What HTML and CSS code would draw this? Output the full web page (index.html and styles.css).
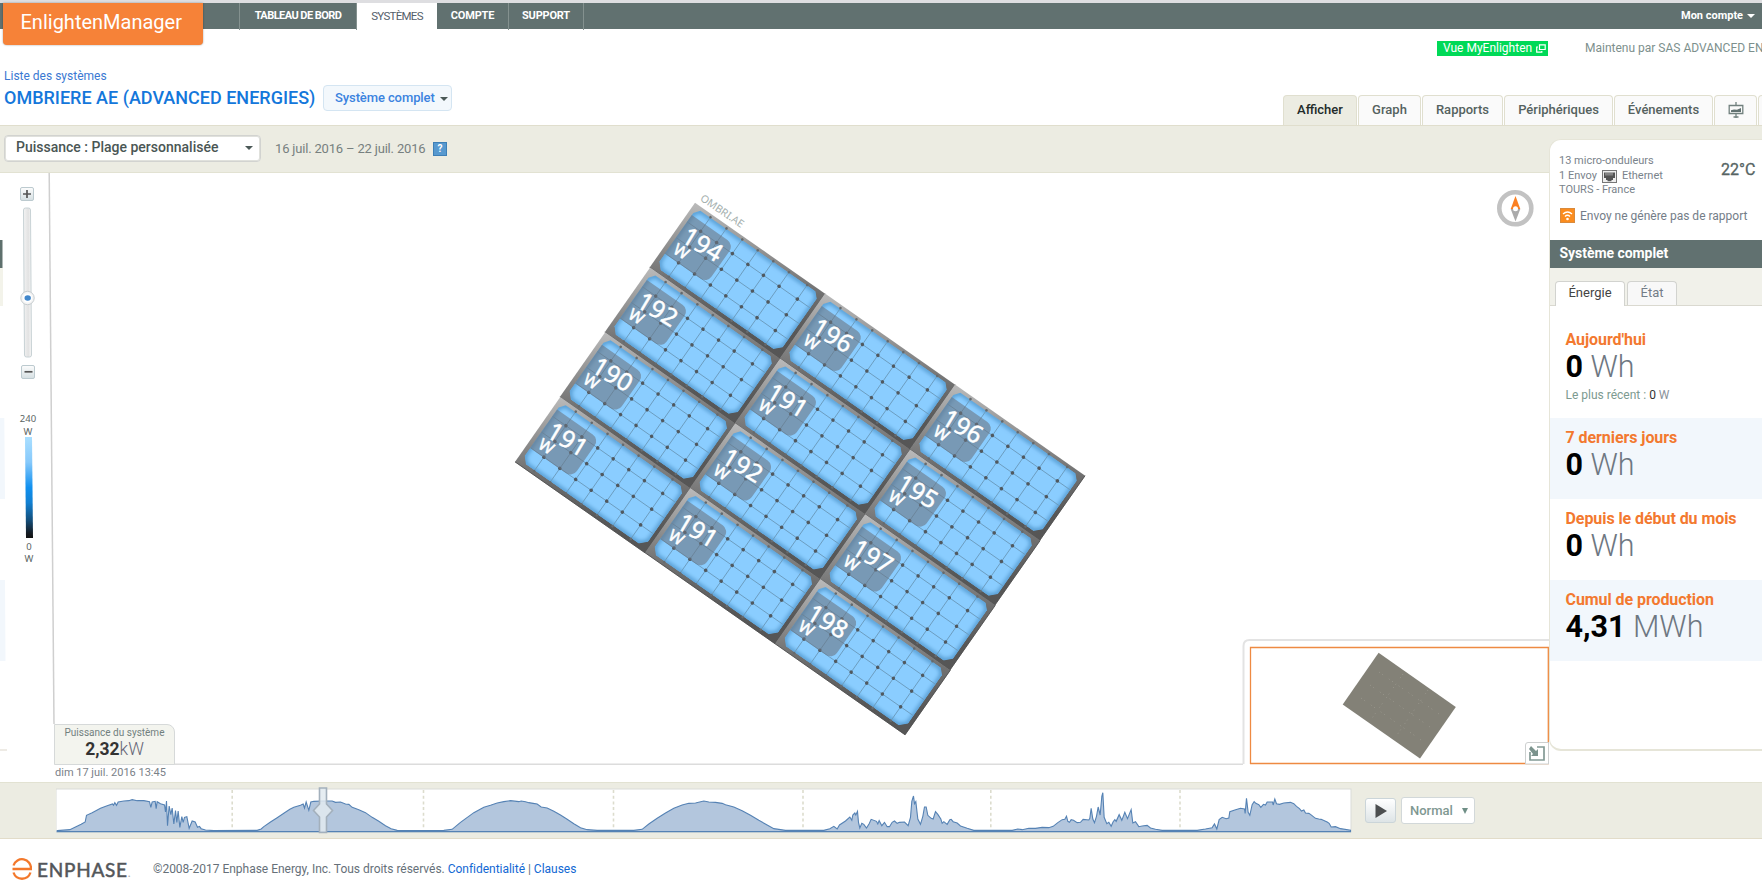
FILE: index.html
```html
<!DOCTYPE html>
<html lang="fr">
<head>
<meta charset="utf-8">
<title>EnlightenManager</title>
<link rel="stylesheet" href="styles.css">
</head>
<body>
<div class="page">
  <nav class="topbar">
    <div class="brand">EnlightenManager</div>
    <a class="nav-item nav-first">TABLEAU DE BORD</a>
    <a class="nav-item nav-active">SYSTÈMES</a>
    <a class="nav-item nav-account">COMPTE</a>
    <a class="nav-item nav-support">SUPPORT</a>
    <span class="my-account">Mon compte <i class="caret caret-white"></i></span>
  </nav>

  <header class="header">
    <div class="heading">
      <a class="crumb">Liste des systèmes</a>
      <div class="title-row">
        <h1 class="title">OMBRIERE AE (ADVANCED ENERGIES)</h1>
        <span class="chip">Système complet <i class="caret"></i></span>
      </div>
    </div>
    <div class="header-right">
      <div class="links">
        <a class="green-link">Vue MyEnlighten
          <svg width="10" height="9" viewBox="0 0 10 9"><path d="M3.5.8h5.700v4.700H3.500zM2 3H.7v5.200h5.100V7" fill="none" stroke="#fff" stroke-width="1.200"/></svg>
        </a>
        <span class="maintained">Maintenu par SAS ADVANCED EN</span>
      </div>
      <div class="tabs">
        <a class="tab tab-on">Afficher</a>
        <a class="tab t-graph">Graph</a>
        <a class="tab t-rapports">Rapports</a>
        <a class="tab t-periph">Périphériques</a>
        <a class="tab t-events">Événements</a>
        <a class="tab t-icon">
          <svg width="16" height="17" viewBox="0 0 16 17"><path d="M8 0v3M1.200 3.500h13.600v8H1.200zM8 12v4M5.500 15h5" fill="none" stroke="#71807e" stroke-width="1.300"/><path d="M3 10V8.200l3-.7 3 .3 4-1.800V10z" fill="#617170"/></svg>
        </a>
        <a class="tab t-last"></a>
      </div>
    </div>
  </header>

  <main class="main">
    <section class="workspace">
      <div class="toolbar">
        <div class="select">Puissance : Plage personnalisée <i class="caret"></i></div>
        <span class="range">16 juil. 2016 – 22 juil. 2016</span>
        <span class="help">?</span>
      </div>
      <div class="stage">
        <svg class="rail" width="55" height="592" viewBox="0 173 55 592">
          <defs>
            <linearGradient id="btn" x1="0" y1="0" x2="0" y2="1"><stop offset="0" stop-color="#fdfdfd"/><stop offset="1" stop-color="#d5dfe2"/></linearGradient>
            <linearGradient id="track"><stop offset="0" stop-color="#f4f4f4"/><stop offset=".6" stop-color="#e2e2e2"/><stop offset="1" stop-color="#f8f8f8"/></linearGradient>
            <linearGradient id="scale" x1="0" y1="0" x2="0" y2="1"><stop offset="0" stop-color="#aadfff"/><stop offset=".25" stop-color="#86c9fb"/><stop offset=".5" stop-color="#1090ef"/><stop offset=".65" stop-color="#1280d2"/><stop offset=".82" stop-color="#134f7c"/><stop offset=".95" stop-color="#151c24"/><stop offset="1" stop-color="#111"/></linearGradient>
          </defs>
          <path d="M0 240h2.500v28H0z" fill="#5e706d"/><path d="M0 268h3v38H0z" fill="#f3f3ea"/>
          <path d="M0 418h4.300l.7 81H0zM0 580h5l.5 81H0z" fill="#f2f7fc"/><path d="M0 750h7" stroke="#e8e4dc" stroke-width="1.500"/>
          <rect x="20.500" y="187.500" width="13" height="13" rx="1.500" fill="url(#btn)" stroke="#bccacf"/>
          <path d="M23 194h8M27 190v8" stroke="#555" stroke-width="1.700"/>
          <path d="M23.500 210q0-2 2-2h3q2 0 2 2l1 145q0 2-2 2h-3q-2 0-2-2z" fill="url(#track)" stroke="#c8d2d5"/>
          <circle cx="27.500" cy="298" r="6.700" fill="#f5f5f5" stroke="#c6cccf"/><circle cx="27.500" cy="298" r="4.500" fill="#fff"/>
          <ellipse cx="27.700" cy="298" rx="3.200" ry="2.700" fill="#4287cb"/>
          <rect x="21.500" y="365.500" width="13" height="13" rx="1.500" fill="url(#btn)" stroke="#bccacf"/>
          <path d="M24.500 371.800h8" stroke="#555" stroke-width="1.700"/>
          <g class="scale-text"><text x="28" y="422">240</text><text x="28" y="434.500">W</text><text x="29" y="549.500">0</text><text x="29" y="561.500">W</text></g>
          <path d="M25 437h7l1 101h-7z" fill="url(#scale)"/>
          <path d="M49.200 173L54 724" stroke="#cfcfcf" stroke-width="1.500"/>
        </svg>
        <svg class="map" width="1494" height="592" viewBox="55 173 1494 592">
          <defs>
            <linearGradient id="frame" gradientUnits="userSpaceOnUse" x1="0" y1="0" x2="80" y2="140"><stop offset="0" stop-color="#bababa"/><stop offset=".5" stop-color="#6e6e6e"/><stop offset=".75" stop-color="#575757"/><stop offset="1" stop-color="#555"/></linearGradient>
            <clipPath id="cellclip"><path id="shape" d="M9 3.500H149.500l5.500 5.500V68l-7 7H10.500l-6-6.500V9.500z"/></clipPath>
            <filter id="soft" x="-10%" y="-10%" width="120%" height="120%"><feGaussianBlur stdDeviation="2"/></filter>
            <g id="panel">
              <rect width="158.900" height="79.100" fill="url(#frame)"/>
              <path d="M158.800 0V79H0" fill="none" stroke="#4e4e4e" stroke-width=".8"/>
              <g clip-path="url(#cellclip)">
                <use href="#shape" fill="#8acdff"/>
                <use href="#shape" fill="none" stroke="#4a91c8" stroke-width="3.800" filter="url(#soft)"/>
                <path d="M21 3V75M40.500 3V75M59.800 3V75M78.700 3V75M97.700 3V75M116.800 3V75M139.100 3V75M4 20.200H156M4 39.400H156M4 58.600H156" stroke="#6c9cbe" stroke-width=".9"/>
              </g>
              <g fill="none" stroke="#505960" stroke-width="3.500" stroke-linecap="round">
                <path id="dots" d="M21 20.200h0M40.500 20.200h0M59.800 20.200h0M78.700 20.200h0M97.700 20.200h0M116.800 20.200h0M139.100 20.200h0"/>
                <use href="#dots" y="19.200"/><use href="#dots" y="38.400"/>
              </g>
              <g fill="none" stroke="#666a6d" stroke-width="2.600" stroke-linecap="round">
                <use href="#dots" y="-17.200"/><use href="#dots" y="55.500"/>
              </g>
              <path d="M4.500 12H48a8 8 0 0 1 8 8V51a8 8 0 0 1-8 8H4.500z" fill="#6a7480" fill-opacity=".58"/>
            </g>
          </defs>
          <use href="#panel" transform="translate(695 202.700) rotate(35)"/>
          <use href="#panel" transform="translate(825 293.600) rotate(35)"/>
          <use href="#panel" transform="translate(955 384.600) rotate(35)"/>
          <use href="#panel" transform="translate(650.100 267.500) rotate(35)"/>
          <use href="#panel" transform="translate(780.100 358.400) rotate(35)"/>
          <use href="#panel" transform="translate(910.100 449.400) rotate(35)"/>
          <use href="#panel" transform="translate(605.200 332.300) rotate(35)"/>
          <use href="#panel" transform="translate(735.200 423.200) rotate(35)"/>
          <use href="#panel" transform="translate(865.200 514.200) rotate(35)"/>
          <use href="#panel" transform="translate(560.300 397.100) rotate(35)"/>
          <use href="#panel" transform="translate(690.300 488) rotate(35)"/>
          <use href="#panel" transform="translate(820.300 579) rotate(35)"/>
          <g class="readings">
            <g transform="translate(702.500 244.500) rotate(31)"><text y="8.500">194</text><text class="unit" x="-14.500" y="22.500">W</text></g>
            <g transform="translate(832.500 335.500) rotate(31)"><text y="8.500">196</text><text class="unit" x="-14.500" y="22.500">W</text></g>
            <g transform="translate(962.500 426.500) rotate(31)"><text y="8.500">196</text><text class="unit" x="-14.500" y="22.500">W</text></g>
            <g transform="translate(657.500 309.500) rotate(31)"><text y="8.500">192</text><text class="unit" x="-14.500" y="22.500">W</text></g>
            <g transform="translate(787.500 400.500) rotate(31)"><text y="8.500">191</text><text class="unit" x="-14.500" y="22.500">W</text></g>
            <g transform="translate(917.500 491.500) rotate(31)"><text y="8.500">195</text><text class="unit" x="-14.500" y="22.500">W</text></g>
            <g transform="translate(612.500 374.500) rotate(31)"><text y="8.500">190</text><text class="unit" x="-14.500" y="22.500">W</text></g>
            <g transform="translate(742.500 465.500) rotate(31)"><text y="8.500">192</text><text class="unit" x="-14.500" y="22.500">W</text></g>
            <g transform="translate(872.500 556.500) rotate(31)"><text y="8.500">197</text><text class="unit" x="-14.500" y="22.500">W</text></g>
            <g transform="translate(567.500 439.500) rotate(31)"><text y="8.500">191</text><text class="unit" x="-14.500" y="22.500">W</text></g>
            <g transform="translate(697.500 530.500) rotate(31)"><text y="8.500">191</text><text class="unit" x="-14.500" y="22.500">W</text></g>
            <g transform="translate(827.500 621.500) rotate(31)"><text y="8.500">198</text><text class="unit" x="-14.500" y="22.500">W</text></g>
          </g>
          <text class="array-name" transform="translate(699.500 200) rotate(34)">OMBRI.AE</text>
          <circle cx="1515.300" cy="208.300" r="16" fill="#fff" stroke="#c2c2c2" stroke-width="4.600"/>
          <path d="M1515.500 196l4.800 13h-9.600z" fill="#fa8023"/><path d="M1510.700 209h9.600l-4.800 12.500z" fill="#aaa"/><circle cx="1515.500" cy="208.700" r="2.500" fill="#fff"/>
          <path d="M55 764.300H1243" stroke="#dcdcdc" stroke-width="1.500"/>
          <path d="M1243.500 764V646q0-6 6-6H1549" fill="#fff" stroke="#e3e3e3" stroke-width="2"/>
          <path d="M1250.500 764V647.500H1548.300V763.500H1250" fill="#fff" stroke="#ee8a42" stroke-width="1.300"/>
          <path d="M1378.600 652.700L1455.800 707 1420 758.500 1342.700 704.500z" fill="#838177"/>
          <path d="M1379 672l60 42M1370 685l60 42M1361 698l60 42M1403 674l-33 47M1428 690l-31 45" stroke="#99978d" stroke-width="1" stroke-dasharray="1 3 1 7"/>
          <path d="M1525.500 764V745q0-2.500 2.500-2.500h20.500V764z" fill="#fff" stroke="#cdd0d0"/>
          <path d="M1537 747h7v13h-14v-8" fill="none" stroke="#839a95" stroke-width="1.700"/><path d="M1531 746l5 5 2-2v7h-7l2-2-4-5z" fill="#7b938d"/>
        </svg>
        <div class="power"><span class="power-label">Puissance du système</span><span class="power-value"><b>2,32</b>kW</span></div>
      </div>
      <div class="stamp">dim 17 juil. 2016 13:45</div>
    </section>

    <aside class="side">
      <div class="card">
        <div class="site">
          <div class="site-text">
            <div>13 micro-onduleurs</div>
            <div class="site-line">1 Envoy
              <svg width="15" height="13" viewBox="0 0 15 13"><rect x=".5" y=".5" width="14" height="12" fill="#eee" stroke="#777"/><path d="M2 2.500h11V8h-2v2H9.500v1.300h-4V10H4V8H2z" fill="#555"/><path d="M4 2.500v3M6 2.500v3M8 2.500v3M10 2.500v3" stroke="#ddd" stroke-width=".7"/></svg>
              Ethernet</div>
            <div>TOURS - France</div>
          </div>
          <div class="temp">22°C</div>
        </div>
        <div class="warn">
          <svg width="15" height="15" viewBox="0 0 15 15"><rect x=".5" y=".5" width="14" height="14" fill="#fb8c1e" stroke="#d98a3c"/><path d="M3 6q4.500-4 9 0M5 8.500q2.500-2.300 5 0" fill="none" stroke="#fff" stroke-width="1.400"/><circle cx="7.500" cy="11" r="1.300" fill="#fff"/></svg>
          <span>Envoy ne génère pas de rapport</span>
        </div>
        <div class="side-title">Système complet</div>
        <div class="side-tabs"><span class="side-tab side-on">Énergie</span><span class="side-tab side-off">État</span></div>
        <div class="stat stat-first"><div class="stat-name">Aujourd'hui</div><div class="stat-value"><b>0</b> Wh</div><div class="latest">Le plus récent : <span class="zero">0</span> <span class="w">W</span></div></div>
        <div class="stat tint"><div class="stat-name">7 derniers jours</div><div class="stat-value"><b>0</b> Wh</div></div>
        <div class="stat"><div class="stat-name">Depuis le début du mois</div><div class="stat-value"><b>0</b> Wh</div></div>
        <div class="stat tint"><div class="stat-name">Cumul de production</div><div class="stat-value"><b>4,31</b> MWh</div></div>
      </div>
    </aside>
  </main>

  <section class="timeline">
    <svg class="chart" width="1296" height="49" viewBox="55.500 787 1296 49">
      <rect x="55.500" y="790" width="1295" height="43" fill="#fff" stroke="#d9dbd8"/>
      <path d="M231.700 791V831M423 791V831M613 791V831M802.500 791V831M990.300 791V831M1179.500 791V831" stroke="#dcdccd" stroke-width="1.600" stroke-dasharray="3 2.700"/>
      <path class="area" transform="translate(0 715) scale(.33333)" d="M170 350L208 347 225 339 242 331 254 324 258 304 275 296 300 283 320 275 336 270 339 274 343 266 348 274 353 264 370 261 385 260 395 257 410 260 430 260 447 263 451 280 455 264 464 262 467 284 470 263 480 269 492 273 495 294 498 261 501 335 506 276 511 302 515 282 520 330 525 290 529 325 533 291 538 340 544 308 548 325 552 310 559 308 566 343 575 321 584 324 591 340 597 337 602 344 615 348 640 350 770 349 782 345 790 338 810 324 830 311 850 298 868 286 880 280 900 274 908 270 912 282 917 264 925 289 931 264 940 262 965 261 995 261 1005 265 1020 264 1035 270 1045 271 1055 280 1075 287 1095 296 1115 310 1135 322 1155 335 1172 344 1190 349 1220 350 1330 349 1355 346 1380 325 1420 296 1450 280 1470 274 1490 267 1510 263 1530 260 1555 263 1562 261 1575 263 1585 266 1598 268 1610 270 1622 279 1640 282 1660 292 1680 303 1700 316 1720 329 1740 341 1760 347 1790 349 1900 349 1925 346 1945 330 1970 313 1995 297 2020 283 2045 273 2065 268 2085 267 2110 261 2125 264 2145 265 2165 268 2175 272 2200 279 2225 290 2250 304 2275 319 2300 333 2320 344 2355 349 2470 349 2488 344 2500 337 2510 345 2517 333 2535 321 2548 309 2554 319 2557 303 2563 297 2566 303 2571 292 2574 325 2578 342 2584 328 2590 331 2598 342 2606 329 2612 316 2628 322 2632 330 2636 320 2644 335 2652 325 2660 338 2667 338 2675 325 2682 321 2690 328 2697 325 2712 324 2723 335 2730 310 2734 262 2739 246 2742 269 2746 263 2752 315 2760 331 2767 307 2772 279 2777 279 2782 304 2792 313 2798 315 2805 293 2812 301 2821 315 2825 328 2830 323 2840 331 2848 317 2852 316 2858 323 2870 327 2880 336 2900 343 2920 349 3035 349 3052 345 3065 347 3085 343 3105 343 3125 340 3145 341 3158 337 3172 326 3185 317 3193 316 3198 307 3202 322 3207 325 3212 317 3219 319 3230 326 3240 325 3248 316 3265 318 3268 313 3272 283 3277 315 3282 326 3288 307 3293 279 3299 303 3304 247 3307 236 3311 310 3319 329 3325 325 3332 337 3338 323 3343 317 3347 322 3356 302 3364 319 3373 295 3381 314 3392 287 3397 327 3405 323 3415 338 3425 336 3440 334 3450 342 3465 346 3485 349 3590 349 3615 345 3635 341 3642 330 3649 345 3656 317 3665 310 3677 314 3685 312 3688 293 3703 288 3720 283 3732 285 3734 298 3738 253 3743 295 3748 304 3755 272 3761 263 3766 268 3775 272 3781 280 3789 271 3795 273 3800 264 3810 264 3816 264 3818 273 3823 255 3828 269 3837 271 3850 267 3870 265 3880 269 3888 277 3897 284 3903 291 3910 288 3915 297 3925 298 3930 301 3945 313 3955 315 3962 316 3980 324 3986 328 3992 339 4005 338 4020 344 4050 349V353H170z"/>
      <path d="M319 789h7v16l6 6.500-6 6.500v15.500h-7V818l-6-6.500 6-6.500z" fill="#e2eaf0" fill-opacity=".85" stroke="#a3b0bc" stroke-width="1.600"/>
    </svg>
    <span class="play"><svg width="12" height="14" viewBox="0 0 12 14"><path d="M.5 0L12 7 .5 14z" fill="#4c4f50"/></svg></span>
    <span class="speed">Normal <i class="caret caret-green"></i></span>
  </section>

  <footer class="footer">
    <svg width="20" height="22" viewBox="0 0 20 22"><path d="M.500 11H19A9 9.300 0 0 0 1.500 7.500M1.500 14.500A9 9.300 0 0 0 18.500 14.500" fill="none" stroke="#f3782b" stroke-width="2.300"/></svg>
    <span class="enphase">ENPHASE<small>.</small></span>
    <span class="legal">©2008-2017 Enphase Energy, Inc. Tous droits réservés. <a>Confidentialité</a> | <a>Clauses</a></span>
  </footer>
</div>
</body>
</html>
```
FILE: styles.css
```css
* { box-sizing: border-box; }
body { margin: 0; background: #fff; font-family: Roboto, "Liberation Sans", sans-serif; overflow: hidden; }
svg { display: block; flex: none; }
.page { width: 1762px; height: 885px; overflow: hidden; display: flex; flex-direction: column; white-space: nowrap; }

.topbar { height: 29px; flex: none; border-top: 3px solid #dedee1; background: #617170; display: flex; position: relative; z-index: 2; }
.brand { width: 200px; height: 42px; margin-left: 3px; margin-right: 36px; background: #f68238; border-radius: 0 0 4px 4px; color: #fff; font-size: 20px; line-height: 39px; padding-left: 17.5px; box-shadow: 0 0 2px rgba(0,0,0,.4); }
.nav-item { height: 27px; line-height: 26px; color: #fff; font-size: 11px; letter-spacing: -.2px; font-weight: 700; text-align: center; border-right: 1px solid #84918f; }
.nav-first { width: 118px; border-left: 1px solid #84918f; letter-spacing: -.55px; }
.nav-active { width: 80px; background: #fff; color: #55606a; font-weight: 400; border: 0; font-size: 11.5px; letter-spacing: -.7px; }
.nav-account { width: 72px; }
.nav-support { width: 75px; }
.my-account { margin-left: auto; width: 81px; color: #fff; font-size: 11px; font-weight: 700; line-height: 26px; }
.caret { display: inline-block; border: 4px solid transparent; border-top: 4.5px solid #4b5957; border-bottom: 0; vertical-align: 1px; margin-left: 2px; }
.caret-white { border-top-color: #fff; margin-left: 1px; }

.header { height: 96px; flex: none; display: flex; justify-content: space-between; }
.heading { padding: 39px 0 0 4px; }
.crumb { display: block; font-size: 12px; line-height: 16px; color: #3a78d2; }
.title-row { display: flex; align-items: center; height: 27px; }
.title { margin: 0; width: 319px; font-size: 18px; font-weight: 500; color: #1477db; }
.chip { width: 129px; height: 26px; border: 1px solid #d4e5f2; border-radius: 4px; background: #f3f8fc; font-size: 13px; letter-spacing: -.1px; font-weight: 500; color: #3b83df; line-height: 23px; padding-left: 11px; }
.header-right { width: 479px; display: flex; flex-direction: column; justify-content: space-between; }
.links { display: flex; align-items: center; padding: 10px 0 0 154px; }
.green-link { width: 111px; height: 15px; background: #00d957; color: #fff; font-size: 12px; line-height: 15px; display: flex; align-items: center; gap: 4px; padding-left: 6px; margin-right: 37px; flex: none; }
.maintained { font-size: 12px; color: #7d908d; line-height: 18px; }
.tabs { display: flex; gap: 1px; overflow: hidden; }
.tab { height: 30px; border: 1px solid #e0dfcf; border-bottom: 0; border-radius: 4px 4px 0 0; background: #fafafa; font-size: 13px; font-weight: 500; color: #55625f; line-height: 28px; padding-bottom: 1px; flex: none; display: flex; justify-content: center; align-items: center; }
.tab-on { width: 74px; background: #ecece2; color: #222b2a; }
.t-graph { width: 63px; } .t-rapports { width: 81px; } .t-periph { width: 109px; } .t-events { width: 99px; } .t-icon { width: 43px; } .t-last { width: 12px; }

.main { height: 657px; flex: none; display: flex; }
.workspace { width: 1549px; display: flex; flex-direction: column; }
.toolbar { height: 48px; background: #ecece2; border-top: 1px solid #e0decd; border-bottom: 1px solid #e2e2d2; display: flex; padding: 9px 0 0 4px; }
.select { width: 257px; height: 27px; border: 1px solid #d2d3d0; border-radius: 4px; box-shadow: 0 0 0 1px #e0e1dc inset; background: #fff; font-size: 14px; font-weight: 500; color: #4a5654; line-height: 21px; padding: 0 7px 2px 11px; display: flex; justify-content: space-between; align-items: center; }
.range { margin-left: 14px; width: 158px; font-size: 13px; letter-spacing: -.18px; color: #77807f; line-height: 28px; }
.help { width: 14px; height: 14px; margin-top: 7px; background: #5799cf; border: 1px solid #3d7fb6; color: #fff; font-size: 10px; font-weight: 700; line-height: 12px; text-align: center; }
.stage { position: relative; display: flex; height: 592px; flex: none; }
.scale-text text { font: 9.5px "Noto Sans", sans-serif; fill: #5b6665; text-anchor: middle; }
.readings text { font: 24.5px "Noto Sans", sans-serif; fill: #fff; stroke: #fff; stroke-width: .5px; text-anchor: middle; }
.readings .unit { font-size: 16px; }
.array-name { font: 10.5px "Noto Sans", sans-serif; fill: #a5b0ae; }
.power { position: absolute; left: 54px; bottom: 0; width: 121px; height: 41px; background: #f3f4ee; border: 1px solid #d6d9d9; border-radius: 0 8px 0 0; display: flex; flex-direction: column; align-items: center; }
.power-label { font-size: 10px; line-height: 15px; color: #71807e; }
.power-value { font-size: 17.5px; line-height: 19px; font-weight: 300; color: #667; }
.power-value b { font-weight: 700; color: #333; }
.stamp { font-size: 11px; line-height: 16px; color: #7a8188; padding-left: 55px; }

.side { width: 213px; background: linear-gradient(#e0decd 1px, #ecece2 1px, #ecece2 47px, #e2e2d2 47px, #e2e2d2 48px, #fff 48px); padding-top: 14px; }
.card { height: 612px; border: 1px solid #e6e5d8; border-right: 0; border-width: 1px 0 2px 1px; border-radius: 12px 0 0 12px; background: #fff; overflow: hidden; }
.site { height: 60px; padding: 14px 0 0 9px; display: flex; }
.site-text { width: 162px; font-size: 11px; line-height: 14.7px; color: #7a838b; }
.site-line { display: flex; gap: 5px; align-items: center; }
.temp { font-size: 16px; line-height: 31px; color: #566463; -webkit-text-stroke: .3px #566463; }
.warn { height: 40px; display: flex; gap: 5px; padding: 8px 0 0 10px; font-size: 12px; line-height: 17px; color: #747d88; }
.side-title { height: 28px; background: #617170; color: #fff; font-size: 14px; font-weight: 700; line-height: 26px; padding-left: 9.5px; letter-spacing: -.05px; }
.side-tabs { height: 38px; background: #f1f1ea; border-bottom: 1px solid #dad9d0; display: flex; gap: 2px; padding: 13px 0 0 5px; }
.side-tab { height: 25px; border: 1px solid #d2d3cf; border-bottom: 0; border-radius: 4px 4px 0 0; font-size: 13px; line-height: 22px; text-align: center; }
.side-on { width: 70px; background: #fff; color: #444; }
.side-off { width: 50px; height: 24px; background: #f8f8f8; color: #747d88; }
.stat { height: 81px; padding: 10px 0 0 15.5px; }
.stat-first { height: 112px; padding-top: 24px; }
.tint { background: #f2f7fc; }
.stat-name { font-size: 16px; line-height: 20px; font-weight: 700; color: #f3792f; letter-spacing: -.07px; }
.stat-value { font-size: 30.5px; line-height: 34px; font-weight: 300; color: #6e7782; }
.stat-value b { font-weight: 700; color: #000; }
.latest { font-size: 12px; line-height: 14px; margin-top: 4px; color: #7d9a90; }
.zero { color: #333; } .w { color: #8b939b; }

.timeline { height: 57px; flex: none; background: #ecece2; border-top: 1px solid #e2e2d2; border-bottom: 1px solid #e2dcc9; display: flex; align-items: center; padding: 0 0 0 55.5px; }
.area { fill: #b3c6dd; stroke: #5582b4; stroke-width: 3.3; }
.play { width: 31px; height: 25px; margin-left: 13.5px; border: 1px solid #cbd5d9; border-radius: 3px; background: linear-gradient(#fff, #dde4e6); display: flex; align-items: center; justify-content: center; }
.speed { width: 74px; height: 27px; margin-left: 5px; border: 1px solid #d2d8d9; border-radius: 3px; background: #fff; color: #7f9892; font-size: 13px; font-weight: 500; line-height: 25px; padding: 0 6px 0 8px; display: flex; justify-content: space-between; align-items: center; }
.caret-green { border-width: 6px 3px 0; border-top-color: #6f8f86; }

.footer { height: 47px; flex: none; display: flex; align-items: center; padding: 13px 0 0 12px; }
.enphase { font-family: Lato, sans-serif; font-size: 19px; color: #53565a; margin-left: 5px; width: 116px; letter-spacing: .75px; -webkit-text-stroke: .5px #53565a; }
.enphase small { font-size: 12px; color: #aaa; -webkit-text-stroke: 0; }
.legal { font-size: 12px; letter-spacing: -.02px; color: #667079; }
.legal a { color: #1268d3; }
```
